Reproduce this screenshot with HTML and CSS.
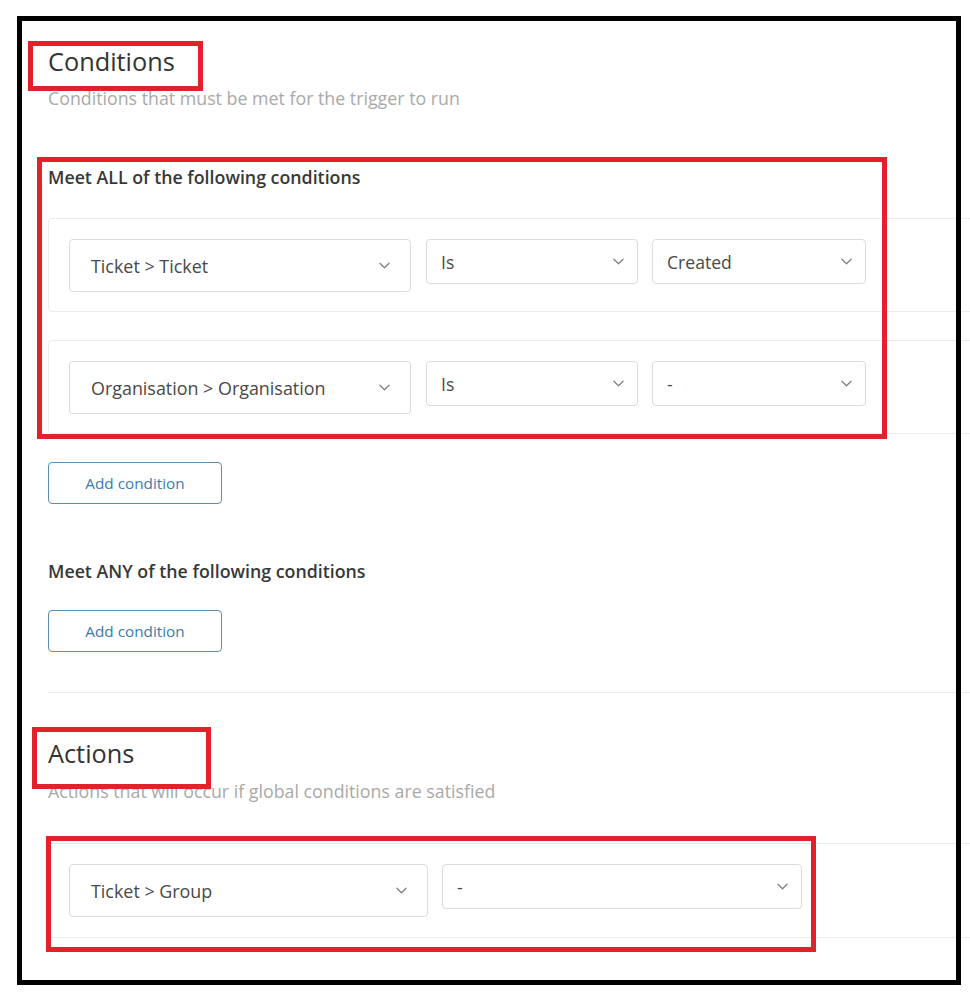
FILE: index.html
```html
<!DOCTYPE html>
<html lang="en">
<head>
<meta charset="utf-8">
<title>Trigger conditions</title>
<link rel="stylesheet" href="styles.css">
</head>
<body>
<main class="page">
  <section class="section">
    <h2 class="title">Conditions</h2>
    <p class="subtitle">Conditions that must be met for the trigger to run</p>

    <h3 class="group-title group-all">Meet ALL of the following conditions</h3>
    <div class="card">
      <div class="row">
        <div class="select select-lg w-field"><span>Ticket &gt; Ticket</span><svg class="chev" viewBox="0 0 12 7"><path d="M1 1l5 5 5-5"/></svg></div>
        <div class="select w-op"><span>Is</span><svg class="chev" viewBox="0 0 12 7"><path d="M1 1l5 5 5-5"/></svg></div>
        <div class="select w-val"><span>Created</span><svg class="chev" viewBox="0 0 12 7"><path d="M1 1l5 5 5-5"/></svg></div>
      </div>
    </div>
    <div class="card card-next">
      <div class="row">
        <div class="select select-lg w-field"><span>Organisation &gt; Organisation</span><svg class="chev" viewBox="0 0 12 7"><path d="M1 1l5 5 5-5"/></svg></div>
        <div class="select w-op"><span>Is</span><svg class="chev" viewBox="0 0 12 7"><path d="M1 1l5 5 5-5"/></svg></div>
        <div class="select w-val"><span>-</span><svg class="chev" viewBox="0 0 12 7"><path d="M1 1l5 5 5-5"/></svg></div>
      </div>
    </div>
    <button class="btn" type="button">Add condition</button>

    <h3 class="group-title group-any">Meet ANY of the following conditions</h3>
    <button class="btn btn-any" type="button">Add condition</button>
  </section>

  <hr class="divider">

  <section class="section">
    <h2 class="title title-actions">Actions</h2>
    <p class="subtitle subtitle-actions">Actions that will occur if global conditions are satisfied</p>
    <div class="card card-action">
      <div class="row">
        <div class="select select-lg w-half"><span>Ticket &gt; Group</span><svg class="chev" viewBox="0 0 12 7"><path d="M1 1l5 5 5-5"/></svg></div>
        <div class="select w-half"><span>-</span><svg class="chev" viewBox="0 0 12 7"><path d="M1 1l5 5 5-5"/></svg></div>
      </div>
    </div>
  </section>
</main>

<div class="frame"></div>
<div class="mark mark-title"></div>
<div class="mark mark-all"></div>
<div class="mark mark-actions"></div>
<div class="mark mark-action-row"></div>
</body>
</html>
```

FILE: styles.css
```css
html, body {
  margin: 0;
  padding: 0;
  background: #ffffff;
  overflow: hidden;
}

body {
  width: 970px;
  height: 1003px;
  position: relative;
  font-family: "Open Sans", "Noto Sans", "Liberation Sans", sans-serif;
  color: #333;
}

.page {
  padding: 46px 0 0 48px;
}

.section {
  display: flex;
  flex-direction: column;
  align-items: flex-start;
}

.title {
  margin: 0;
  font-size: 25.3px;
  line-height: 30px;
  font-weight: 400;
  color: #333;
}

.subtitle {
  margin: 11px 0 0;
  font-size: 17.8px;
  line-height: 22px;
  color: #a9a9a9;
}

.group-title {
  margin: 0;
  font-size: 17.8px;
  line-height: 22px;
  font-weight: 600;
  color: #383838;
}

.group-all { margin-top: 57px; }
.group-any { margin-top: 56px; }

.card {
  box-sizing: border-box;
  width: 940px;
  margin-top: 30px;
  padding: 20px 20px 19px;
  border: 1px solid #ebebeb;
  border-radius: 4px;
}

.card-next { margin-top: 28px; }

.card-action {
  margin-top: 41px;
  padding-bottom: 20px;
}

.row {
  display: flex;
  align-items: flex-start;
  gap: 14px;
}

.select {
  box-sizing: border-box;
  height: 45px;
  display: flex;
  align-items: center;
  justify-content: space-between;
  padding: 0 13px 0 14px;
  border: 1px solid #dcdcdc;
  border-radius: 4px;
  background: #fff;
  font-size: 17.6px;
  color: #484848;
}

.select-lg {
  height: 53px;
  padding: 0 20px 0 21px;
  font-size: 17.9px;
}

.w-field { width: 342px; margin-right: 1px; }
.w-op { width: 212px; }
.w-val { width: 214px; }
.w-half { width: 359px; }
.w-half + .w-half { width: 360px; }

.chev {
  width: 11px;
  height: 7px;
  flex: none;
  fill: none;
  stroke: #7d7d7d;
  stroke-width: 1.3;
  stroke-linecap: round;
  stroke-linejoin: round;
}

.btn {
  box-sizing: border-box;
  width: 174px;
  height: 42px;
  margin-top: 28px;
  padding: 0;
  border: 1px solid #5b8db5;
  border-radius: 4px;
  background: #fff;
  font-family: inherit;
  font-size: 15.3px;
  color: #3b7bb0;
}

.divider {
  width: 940px;
  height: 1px;
  margin: 40px 0 0;
  border: 0;
  background: #ececec;
}

.title-actions { margin-top: 45px; }
.subtitle-actions { margin-top: 12px; }

/* annotation overlay */
.frame {
  position: absolute;
  left: 17px;
  top: 16px;
  width: 934px;
  height: 959px;
  border: 5px solid #000;
}

.mark {
  position: absolute;
  box-sizing: border-box;
  border: 5px solid #e3212b;
}

.mark-title { left: 28px; top: 41px; width: 175px; height: 50px; }
.mark-all { left: 37px; top: 157px; width: 850px; height: 282px; }
.mark-actions { left: 32px; top: 727px; width: 179px; height: 62px; }
.mark-action-row { left: 46px; top: 836px; width: 770px; height: 116px; }
```
